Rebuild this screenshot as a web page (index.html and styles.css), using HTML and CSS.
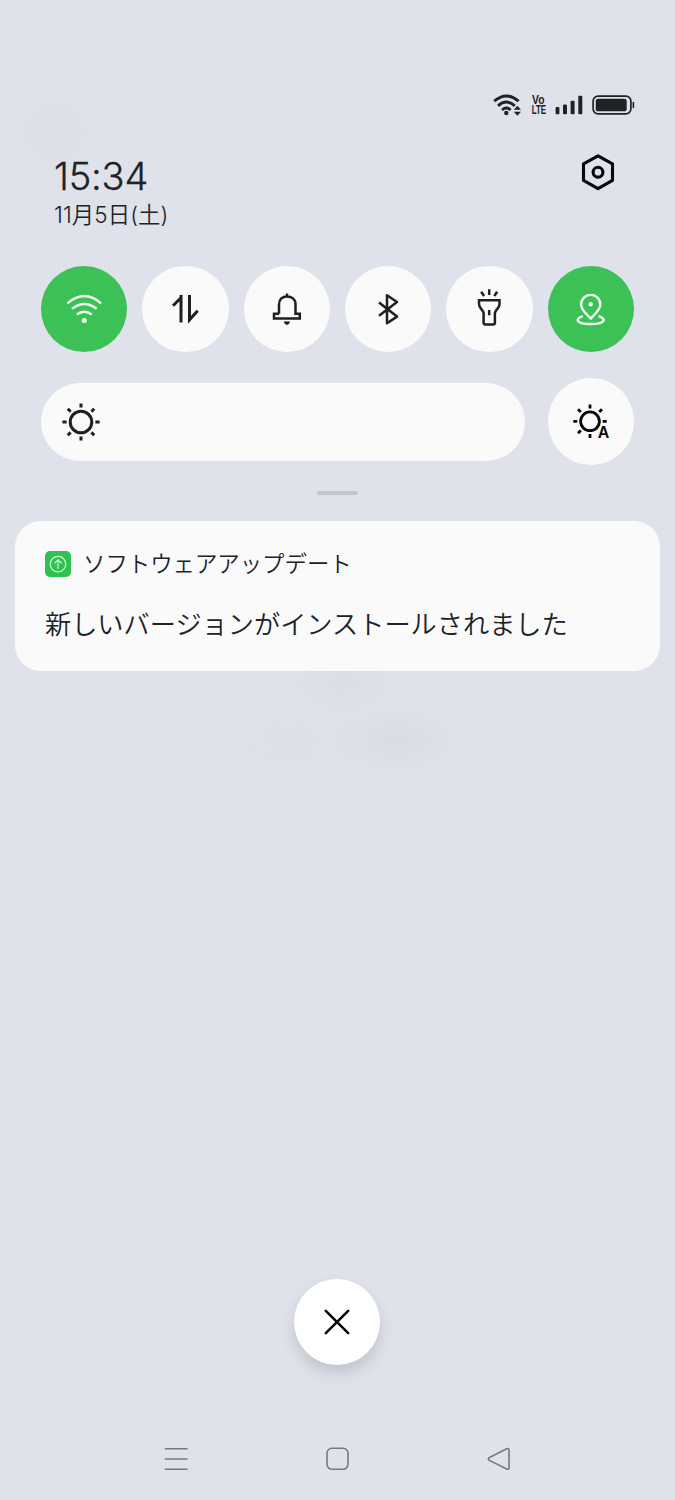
FILE: index.html
```html
<!DOCTYPE html>
<html lang="ja">
<head>
<meta charset="utf-8">
<title>通知パネル</title>
<link rel="stylesheet" href="styles.css">
</head>
<body>
<main class="panel">
  <div class="status">
    <svg class="status-wifi" viewBox="0 0 30 24" width="30" height="24">
      <g fill="none" stroke="#202226" stroke-width="2.9">
        <path d="M1.2 8.2Q13.4-2.4 25.6 8.2M5 12.8Q13.4 5.4 21.8 12.8M9 17Q13.4 13.2 17.6 17"/>
      </g>
      <circle cx="13.3" cy="20" r="2.2" fill="#202226"/>
      <path d="M20.8 16.8l3.6-4 3.6 4zM20.8 18.8l3.6 4 3.6-4z" fill="#202226"/>
    </svg>
    <div class="volte"><span>Vo</span><span>LTE</span></div>
    <svg class="status-signal" viewBox="0 0 28 20" width="28" height="20" fill="#202226">
      <rect x=".6" y="12" width="3.8" height="7.3" rx="1"/><rect x="8" y="9.6" width="4" height="9.7" rx="1"/>
      <rect x="15.6" y="5.7" width="4" height="13.6" rx="1"/><rect x="23.3" y=".7" width="4" height="18.6" rx="1"/>
    </svg>
    <svg class="status-battery" viewBox="0 0 43 20" width="43" height="20">
      <rect x="1.1" y="1.2" width="37.8" height="17.6" rx="5" fill="none" stroke="#202226" stroke-width="1.7"/>
      <rect x="3.7" y="3.7" width="31" height="12.6" rx="2.6" fill="#202226"/>
      <rect x="40.6" y="6.7" width="1.6" height="6.6" rx=".8" fill="#202226"/>
    </svg>
  </div>

  <header class="header">
    <div>
      <div class="time">15:34</div>
      <div class="date">11月5日(土)</div>
    </div>
    <svg class="settings" viewBox="0 0 36 38" width="36" height="38" fill="none" stroke="#08090b" stroke-width="3.1" stroke-linejoin="round">
      <path d="M18 2.8L32.5 10.8V27.4L18 35.6 3.5 27.4V10.8z"/><circle cx="18" cy="19.2" r="4.9"/>
    </svg>
  </header>

  <section class="tiles">
    <div class="circle on">
      <svg viewBox="0 0 86 86"><path d="M26.5 37.3Q43.3 22.8 60.1 37.3M31 42.8Q43.3 33 55.6 42.8M35.8 48.5Q43.3 42.8 50.8 48.5"/><circle class="solid" cx="43.3" cy="54.5" r="2.5"/></svg>
    </div>
    <div class="circle">
      <svg viewBox="0 0 86 86"><path stroke-width="3" d="M31 39.8L39 31.8V56.5M39 29V34M47.5 29V53.8L55.7 44.8"/></svg>
    </div>
    <div class="circle">
      <svg viewBox="0 0 86 86"><path d="M35 47.8V38.5C35 33.2 38.5 30.5 43 30.5S51.5 33.2 51.5 38.5V47.8H55.8V52.5H30V47.8H35M43 30.5V27.4"/><path class="solid" d="M39.8 55.6H46C45.7 57.7 44.5 58.7 42.9 58.7S40.1 57.7 39.8 55.6z"/></svg>
    </div>
    <div class="circle">
      <svg viewBox="0 0 86 86"><path stroke-linejoin="round" d="M34 36.5L52 50.6 42 57.2V29.2L52 36 34 49.8"/></svg>
    </div>
    <div class="circle">
      <svg viewBox="0 0 86 86"><path d="M33 34.2H53.5V38C53.5 43 48.9 43.5 48.9 47.3V56.8Q48.9 58.6 47 58.6H39.4Q37.6 58.6 37.6 56.8V47.3C37.6 43.5 33 43 33 38zM43.2 44V49.2M43.2 23.3V29M35.2 25.8L38.1 30M51.2 25.8L48.3 30"/></svg>
    </div>
    <div class="circle on">
      <svg viewBox="0 0 86 86"><path stroke-linejoin="round" d="M42.7 52.6C38.5 48 33.1 44.2 33.1 38.5A9.6 9.6 0 0 1 52.3 38.5C52.3 44.2 46.9 48 42.7 52.6zM34.8 50.2C25.5 53.2 29 58 42.7 58S59.9 53.2 50.6 50.2"/><circle class="solid" cx="42.7" cy="38.3" r="2.2"/></svg>
    </div>
  </section>

  <section class="brightness">
    <div class="slider">
      <svg viewBox="-20 -20 40 40" width="40" height="40"><circle r="10.8"/><path d="M0-18.6V-14.4M0 18.6V14.4M-18.6 0H-14.4M18.6 0H14.4M-13.2-13.2L-10.4-10.4M13.2-13.2L10.4-10.4M-13.2 13.2L-10.4 10.4M13.2 13.2L10.4 10.4"/></svg>
    </div>
    <div class="circle auto">
      <svg viewBox="0 0 86 86"><g transform="translate(42 43.3)"><circle r="9.4"/><path d="M0-16.7V-12.7M0 16.7V12.7M-16.7 0H-12.7M16.7 0H12.7M-12-12L-9.2-9.2M12-12L9.2-9.2M-12 12L-9.2 9.2"/></g><text x="49.8" y="60.3">A</text></svg>
    </div>
  </section>

  <div class="handle"></div>

  <article class="card">
    <div class="card-app">
      <svg class="app-icon" viewBox="0 0 26 26" width="26" height="26"><rect width="26" height="26" rx="5" fill="#2fc251"/><g fill="none" stroke="#d8ffe0" stroke-width="1.1"><circle cx="13" cy="13.2" r="7.8"/><path d="M13 18V9M9.4 12.3L13 8.8 16.6 12.3"/></g></svg>
      <span class="app-name">ソフトウェアアップデート</span>
    </div>
    <div class="card-title">新しいバージョンがインストールされました</div>
  </article>

  <div class="close">
    <svg viewBox="0 0 26 26" width="26" height="26" fill="none" stroke="#000" stroke-width="2.5" stroke-linecap="round"><path d="M1.8 1.8L24.2 24.2M24.2 1.8L1.8 24.2"/></svg>
  </div>

  <nav class="nav">
    <svg viewBox="0 0 24 24" width="24" height="24"><path d="M.8 1.7H23.6M.8 12H23.6M.8 22.2H23.6"/></svg>
    <svg viewBox="0 0 24 24" width="24" height="24"><rect x="1" y="1.3" width="21" height="21" rx="5"/></svg>
    <svg viewBox="0 0 24 24" width="24" height="24"><path d="M2 10.7L19.7 1.7Q22 .9 22 3.2V20.5Q22 22.9 19.7 21.9L2 13.1Q.7 12 2 10.7z"/></svg>
  </nav>
</main>
</body>
</html>
```

FILE: styles.css
```css
* { box-sizing: border-box; }

body {
  margin: 0;
  font-family: "Noto Sans CJK JP", sans-serif;
  color: #202226;
}

.panel {
  display: flex;
  flex-direction: column;
  width: 675px;
  height: 1500px;
  padding-top: 93px;
  overflow: hidden;
  background:
    radial-gradient(ellipse 65px 36px at 397px 740px, rgba(200, 202, 210, .26), transparent),
    radial-gradient(ellipse 90px 36px at 290px 740px, rgba(205, 207, 216, .12), transparent),
    radial-gradient(ellipse 60px 36px at 342px 683px, rgba(205, 205, 214, .2), transparent),
    radial-gradient(ellipse 45px 40px at 55px 132px, rgba(205, 207, 216, .18), transparent),
    #dfe2ea;
}

.panel > * { flex-shrink: 0; }

.status {
  display: flex;
  height: 24px;
  padding-left: 493px;
  align-items: center;
}

.volte {
  display: flex;
  flex-direction: column;
  width: 15px;
  margin-left: 8px;
  font: 700 12px/10px "Liberation Sans", sans-serif;
  align-items: center;
}

.volte span { transform: scaleX(.66); }
.volte span:first-child { transform: scaleX(.86); }

.status-signal { margin-left: 9px; }
.status-battery { margin-left: 9px; }

.header {
  display: flex;
  height: 149px;
  padding: 36px 59px 0 54px;
  justify-content: space-between;
  align-items: flex-start;
}

.time {
  font: 300 38px/46px Inter, sans-serif;
  letter-spacing: -.2px;
  -webkit-text-stroke: .3px #202226;
}

.date {
  font-family: Inter, "Noto Sans CJK JP", sans-serif;
  font-size: 22.4px;
  font-weight: 350;
  letter-spacing: .1px;
  line-height: 31px;
}

.tiles {
  display: flex;
  margin: 0 41px;
  justify-content: space-between;
}

.circle {
  width: 86.4px;
  height: 86.4px;
  border-radius: 50%;
  background: #fafafa;
}

.circle svg {
  display: block;
  width: 86px;
  height: 86px;
  fill: none;
  stroke: #1e1f22;
  stroke-width: 2.5;
}

.circle .solid { fill: #1e1f22; stroke: none; }
.circle.on { background: #3bc156; }
.circle.on svg { stroke: #f1fff2; stroke-width: 2.4; }
.circle.on .solid { fill: #f1fff2; }

.brightness {
  display: flex;
  margin: 26px 41px 0;
  justify-content: space-between;
  align-items: center;
}

.slider {
  display: flex;
  width: 484px;
  height: 78px;
  padding-left: 19.5px;
  border-radius: 39px;
  background: #fafafa;
  align-items: center;
}

.slider svg {
  fill: none;
  stroke: #1e1f22;
  stroke-width: 3;
}

.circle.auto svg { stroke: #08090b; stroke-width: 2.8; }

.auto text {
  fill: #08090b;
  stroke: none;
  font: 700 16px "Liberation Sans", sans-serif;
}

.handle {
  width: 41px;
  height: 4px;
  margin: 26px auto 0;
  border-radius: 2px;
  background: #c3c5ce;
}

.card {
  height: 150px;
  margin: 26px 15px 0;
  padding: 26px 30px 0;
  border-radius: 26px;
  background: #fafafa;
  font-weight: 350;
}

.card-app {
  display: flex;
  height: 34px;
  gap: 12px;
  align-items: center;
  font-size: 22.4px;
  line-height: 30px;
}

.app-name { padding-bottom: 4px; }

.card-title {
  margin-top: 22px;
  font-size: 26.2px;
  line-height: 40px;
  white-space: nowrap;
}

.close {
  display: flex;
  width: 86px;
  height: 86px;
  margin: 609px 0 0 294.4px;
  border-radius: 50%;
  background: #fff;
  box-shadow: 0 8px 14px rgba(80, 80, 85, .2);
  align-items: center;
  justify-content: center;
}

.card + .close { margin-top: 608px; }

.nav {
  display: flex;
  margin: 82px 164px 0;
  justify-content: space-between;
}

.nav svg {
  fill: none;
  stroke: #777982;
  stroke-width: 1.6;
}
```
